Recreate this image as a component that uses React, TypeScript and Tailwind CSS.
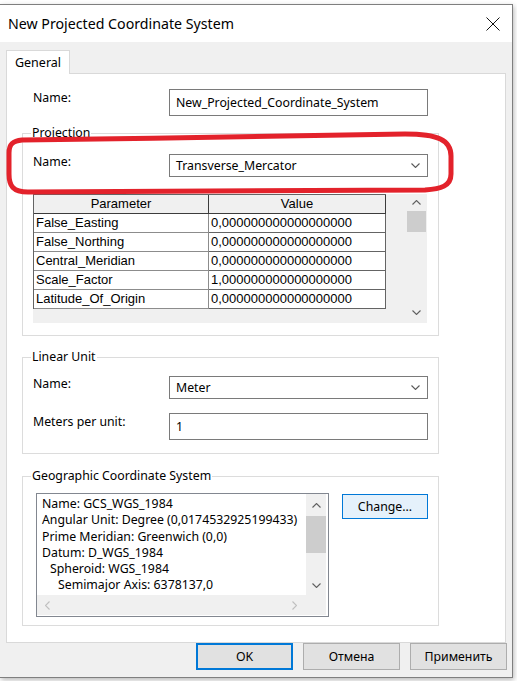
import React from "react";

const UI = "font-['Noto_Sans',sans-serif]";
const ARIAL = "font-['Liberation_Sans',Arial,sans-serif]";

function Chevron({ dir, color = "#606060" }: { dir: "up" | "down" | "left" | "right"; color?: string }) {
  if (dir === "up" || dir === "down") {
    const pts = dir === "down" ? "0.5,0.5 4.5,4.5 8.5,0.5" : "0.5,4.5 4.5,0.5 8.5,4.5";
    return (
      <svg width="9" height="5" viewBox="0 0 9 5">
        <polyline points={pts} fill="none" stroke={color} strokeWidth="1.1" />
      </svg>
    );
  }
  const pts = dir === "right" ? "0.5,0.5 4.5,4.5 0.5,8.5" : "4.5,0.5 0.5,4.5 4.5,8.5";
  return (
    <svg width="5" height="9" viewBox="0 0 5 9">
      <polyline points={pts} fill="none" stroke={color} strokeWidth="1.1" />
    </svg>
  );
}

function Combo({ value }: { value: string }) {
  return (
    <div className="w-[259px] h-[23px] border border-[#7a7a7a] bg-white flex items-center justify-between pl-[6px] pr-[7px]">
      <span className="text-[12.3px] leading-[16px] text-black">{value}</span>
      <Chevron dir="down" color="#5a5a5a" />
    </div>
  );
}

function TextInput({ value }: { value: string }) {
  return (
    <div className="w-[259px] h-[27px] border border-[#7a7a7a] bg-white flex items-center pl-[6px]">
      <span className="text-[12.3px] leading-[16px] text-black">{value}</span>
    </div>
  );
}

function Group({ title, className, children }: { title: string; className: string; children?: React.ReactNode }) {
  return (
    <div className={"border border-[#dcdcdc] w-[417px] ml-[15px] flex flex-col " + className}>
      <div className="-mt-[9px] ml-[8px] px-[1px] bg-white w-fit leading-[16px] text-[12.3px] text-black">{title}</div>
      {children}
    </div>
  );
}

const params = [
  ["False_Easting", "0,000000000000000000"],
  ["False_Northing", "0,000000000000000000"],
  ["Central_Meridian", "0,000000000000000000"],
  ["Scale_Factor", "1,000000000000000000"],
  ["Latitude_Of_Origin", "0,000000000000000000"],
];

function ParamTable() {
  return (
    <div className={"ml-[10px] mt-[17px] w-[394px] h-[129px] bg-[#f0f0f0] flex " + ARIAL}>
      <div className="w-[353px] flex flex-col">
        <div className="flex h-[20px] border-t border-l border-[#646464] bg-[#f0f0f0]">
          <div className="w-[175px] border-r border-b border-[#3c3c3c] flex items-center justify-center text-[13px] leading-[18px] text-black">
            Parameter
          </div>
          <div className="w-[177px] border-r border-b border-[#3c3c3c] flex items-center justify-center text-[13px] leading-[18px] text-black">
            Value
          </div>
        </div>
        {params.map(([p, v]) => (
          <div key={p} className="flex h-[19px] border-l border-[#646464] bg-white">
            <div className="w-[175px] border-r border-b border-[#8c8c8c] flex items-center pl-[2px] text-[13px] leading-[18px] text-black whitespace-nowrap overflow-hidden">
              {p}
            </div>
            <div className="w-[177px] border-r border-b border-[#646464] flex items-center pl-[2px] text-[13px] leading-[18px] text-black whitespace-nowrap overflow-hidden">
              {v}
            </div>
          </div>
        ))}
      </div>
      <div className="ml-[20px] w-[21px] flex flex-col">
        <div className="h-[17px] flex items-center justify-center">
          <Chevron dir="up" />
        </div>
        <div className="ml-[1px] w-[19px] h-[21px] bg-[#cdcdcd]" />
        <div className="flex-1" />
        <div className="h-[17px] mb-[2px] flex items-center justify-center">
          <Chevron dir="down" />
        </div>
      </div>
    </div>
  );
}

const gcsLines: [string, string][] = [
  ["Name: GCS_WGS_1984", "pl-[5px]"],
  ["Angular Unit: Degree (0,0174532925199433)", "pl-[5px]"],
  ["Prime Meridian: Greenwich (0,0)", "pl-[5px]"],
  ["Datum: D_WGS_1984", "pl-[5px]"],
  ["Spheroid: WGS_1984", "pl-[13px]"],
  ["Semimajor Axis: 6378137,0", "pl-[21px]"],
];

function GcsBox() {
  return (
    <div className="mt-[9px] ml-[13px] w-[293px] h-[124px] border border-[#828790] bg-white flex flex-col">
      <div className="flex h-[101px]">
        <div className="w-[269px] pt-[2px] overflow-hidden">
          {gcsLines.map(([t, pad]) => (
            <div key={t} className={"text-[12.3px] leading-[16.3px] text-black whitespace-nowrap " + pad}>
              {t}
            </div>
          ))}
        </div>
        <div className="w-[20px] bg-[#f0f0f0] flex flex-col">
          <div className="h-[22px] flex items-center justify-center">
            <Chevron dir="up" />
          </div>
          <div className="h-[37px] bg-[#cdcdcd]" />
          <div className="flex-1" />
          <div className="h-[20px] flex items-center justify-center">
            <Chevron dir="down" />
          </div>
        </div>
      </div>
      <div className="h-[20px] w-[289px] bg-[#f0f0f0] flex items-center justify-between pl-[8px] pr-[29px]">
        <Chevron dir="left" color="#bfbfbf" />
        <Chevron dir="right" color="#bfbfbf" />
      </div>
    </div>
  );
}

export default function App() {
  return (
    <div className={"relative w-[517px] h-[681px] bg-white overflow-hidden " + UI}>
      <div className="mt-[4px] w-[513px] h-[674px] border-t border-r border-b border-[#7f7f7f] bg-[#f0f0f0] flex flex-col shadow-[1px_2px_5px_rgba(0,0,0,0.28)]">
        {/* Title bar */}
        <div className="h-[37px] bg-white flex items-center justify-between pl-[8px] pr-[12px]">
          <span className="text-[14.2px] leading-[20px] text-black">New Projected Coordinate System</span>
          <svg width="14" height="14" viewBox="0 0 14 14">
            <line x1="0.5" y1="0.5" x2="13.5" y2="13.5" stroke="#111" strokeWidth="1" />
            <line x1="13.5" y1="0.5" x2="0.5" y2="13.5" stroke="#111" strokeWidth="1" />
          </svg>
        </div>

        {/* Body */}
        <div className="pt-[8px] flex flex-col">
          <div className="ml-[6px] w-[64px] h-[24px] -mb-px relative z-10 bg-white border-t border-l border-r border-[#d9d9d9] flex items-center justify-center pt-[1px]">
            <span className="text-[12.5px] leading-[16px] text-black">General</span>
          </div>
          <div className="ml-[6px] w-[500px] h-[570px] border border-[#d9d9d9] bg-white flex flex-col">
            {/* Name row */}
            <div className="mt-[15px] ml-[26px] flex items-start">
              <div className="w-[136px] pt-[1px] text-[12.3px] leading-[16px] text-black">Name:</div>
              <TextInput value="New_Projected_Coordinate_System" />
            </div>

            {/* Projection */}
            <Group title="Projection" className="mt-[17px] h-[203px]">
              <div className="mt-[13px] ml-[10px] flex items-start">
                <div className="w-[136px] text-[12.3px] leading-[16px] text-black">Name:</div>
                <Combo value="Transverse_Mercator" />
              </div>
              <ParamTable />
            </Group>

            {/* Linear Unit */}
            <Group title="Linear Unit" className="mt-[21px] h-[97px]">
              <div className="mt-[11px] ml-[10px] flex items-start">
                <div className="w-[136px] text-[12.3px] leading-[16px] text-black">Name:</div>
                <Combo value="Meter" />
              </div>
              <div className="mt-[14px] ml-[10px] flex items-start">
                <div className="w-[136px] pt-[1px] text-[12.3px] leading-[16px] text-black">Meters per unit:</div>
                <TextInput value="1" />
              </div>
            </Group>

            {/* Geographic Coordinate System */}
            <Group title="Geographic Coordinate System" className="mt-[22px] h-[150px]">
              <div className="flex items-start">
                <GcsBox />
                <div className="mt-[10px] ml-[13px] w-[86px] h-[25px] border border-[#0078d7] bg-[#e5f1fb] flex items-center justify-center">
                  <span className="text-[12.3px] leading-[16px] text-black">Change...</span>
                </div>
              </div>
            </Group>
          </div>

          {/* Buttons */}
          <div className="flex justify-end gap-[10px] pr-[5px]">
            <div className="w-[97px] h-[27px] border-2 border-[#0078d7] bg-[#e1e1e1] flex items-center justify-center">
              <span className="text-[12.3px] leading-[16px] text-black">OK</span>
            </div>
            <div className="w-[97px] h-[27px] border border-[#adadad] bg-[#e1e1e1] flex items-center justify-center">
              <span className="text-[12.3px] leading-[16px] text-black">Отмена</span>
            </div>
            <div className="w-[97px] h-[27px] border border-[#adadad] bg-[#e1e1e1] flex items-center justify-center">
              <span className="text-[12.3px] leading-[16px] text-black">Применить</span>
            </div>
          </div>
        </div>
      </div>

      {/* Red hand-drawn highlight */}
      <svg className="absolute left-0 top-0 pointer-events-none" width="517" height="681" viewBox="0 0 517 681">
        <path
          d="M 22 140 C 150 139, 300 135, 405 134 C 438 134, 451 140, 451 156 L 451 174 C 451 186, 441 189, 425 190 L 28 192 C 13 192, 9 186, 9 174 L 9 153 C 9 144, 13 141, 22 140 Z"
          fill="none"
          stroke="#e3222b"
          strokeWidth="5"
          strokeLinejoin="round"
        />
      </svg>
    </div>
  );
}
